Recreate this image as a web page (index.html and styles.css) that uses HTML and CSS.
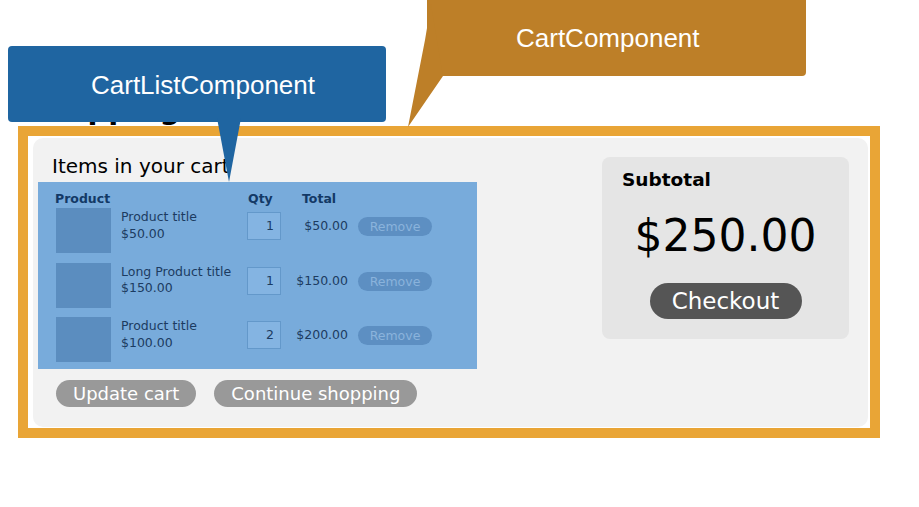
FILE: index.html
```html
<!DOCTYPE html>
<html lang="en">
<head>
<meta charset="utf-8">
<title>Cart</title>
<link rel="stylesheet" href="styles.css">
</head>
<body>
<div class="page">
  <h1 class="page-title">Shopping cart</h1>
  <div class="cart-frame">
    <div class="cart-panel">
      <div class="cart-main">
        <h2 class="items-heading">Items in your cart</h2>
        <div class="cart-list">
          <div class="list-head">
            <span class="h-product">Product</span>
            <span class="h-qty">Qty</span>
            <span class="h-total">Total</span>
          </div>
          <div class="list-row">
            <div class="thumb"></div>
            <div class="info"><div>Product title</div><div>$50.00</div></div>
            <div class="qty">1</div>
            <div class="line-total">$50.00</div>
            <div class="remove">Remove</div>
          </div>
          <div class="list-row">
            <div class="thumb"></div>
            <div class="info"><div>Long Product title</div><div>$150.00</div></div>
            <div class="qty">1</div>
            <div class="line-total">$150.00</div>
            <div class="remove">Remove</div>
          </div>
          <div class="list-row">
            <div class="thumb"></div>
            <div class="info"><div>Product title</div><div>$100.00</div></div>
            <div class="qty">2</div>
            <div class="line-total">$200.00</div>
            <div class="remove">Remove</div>
          </div>
        </div>
        <div class="cart-actions">
          <span class="pill">Update cart</span>
          <span class="pill">Continue shopping</span>
        </div>
      </div>
      <aside class="summary">
        <div class="summary-label">Subtotal</div>
        <div class="summary-amount">$250.00</div>
        <div class="summary-action"><span class="checkout">Checkout</span></div>
      </aside>
    </div>
  </div>

  <div class="callout callout-list">CartListComponent<svg class="tail" width="378" height="140" viewBox="0 0 378 140"><path d="M209 72 L233 72 L221 136 Z" fill="#1f65a1"/></svg></div>
  <div class="callout callout-cart">CartComponent<svg class="tail" width="379" height="140" viewBox="0 0 379 140"><path d="M4 10 L-2 46 L-19 133 L16 82 Z" fill="#bd7f28"/></svg></div>
</div>
</body>
</html>
```

FILE: styles.css
```css
* { box-sizing: border-box; }

html, body {
  margin: 0;
  padding: 0;
  background: #ffffff;
}

body {
  font-family: "DejaVu Sans", Verdana, sans-serif;
  color: #000;
  width: 919px;
  height: 507px;
  overflow: hidden;
}

.page {
  position: relative;
  padding-top: 92px;
}

.page-title {
  margin: 0 0 0 26px;
  font-size: 29px;
  line-height: 34px;
  font-weight: bold;
}

.cart-frame {
  margin-left: 18px;
  width: 862px;
  height: 312px;
  border: 10px solid #e9a536;
  padding: 2px 2px 1px 5px;
}

.cart-panel {
  height: 289px;
  background: #f2f2f2;
  border-radius: 10px;
  display: flex;
  justify-content: space-between;
  align-items: flex-start;
}

.cart-main {
  padding: 17px 0 0 5px;
}

.items-heading {
  margin: 0 0 4px 14px;
  font-size: 20px;
  line-height: 23px;
  font-weight: normal;
}

.cart-list {
  width: 439px;
  background: #78abdb;
  padding: 9px 0 7px 18px;
  color: #1c3b61;
  font-size: 12.5px;
}

.list-head,
.list-row {
  display: grid;
  grid-template-columns: 65px 126px 34px 77px 74px;
}

.list-head {
  font-weight: bold;
  line-height: 15px;
  margin-bottom: 2px;
  color: #133966;
}

.h-product { grid-column: 1 / 3; margin-left: -1px; }
.h-qty { grid-column: 3; margin-left: 1px; }
.h-total { grid-column: 4; padding-left: 21px; }

.list-row {
  height: 45px;
  align-items: start;
}

.list-row + .list-row { margin-top: 9.5px; }

.thumb {
  width: 55px;
  height: 45px;
  background: #5b8dbf;
}

.info {
  margin-top: 1px;
  line-height: 16.5px;
  white-space: nowrap;
}

.qty {
  margin-top: 4px;
  height: 28px;
  line-height: 26px;
  border: 1px solid #6398ca;
  background: #84b4e2;
  text-align: right;
  padding-right: 6px;
}

.line-total {
  margin-top: 4px;
  height: 28px;
  line-height: 28px;
  text-align: right;
  padding-right: 10px;
  white-space: nowrap;
}

.remove {
  margin-top: 9px;
  height: 19px;
  line-height: 19px;
  border-radius: 10px;
  background: #5d8fc2;
  color: #8ab3dc;
  text-align: center;
}

.cart-actions {
  margin: 11px 0 0 18px;
  display: flex;
  gap: 18px;
}

.pill {
  height: 27px;
  line-height: 27px;
  padding: 0 17px;
  border-radius: 14px;
  background: #999999;
  color: #ffffff;
  font-size: 18px;
  white-space: nowrap;
}

.summary {
  margin: 19px 19px 0 0;
  width: 247px;
  height: 182px;
  background: #e5e5e5;
  border-radius: 8px;
  padding: 12px 0 0 20px;
}

.summary-label {
  font-weight: bold;
  font-size: 18.5px;
  line-height: 22px;
}

.summary-amount {
  margin: 19px 0 0 -20px;
  font-size: 44px;
  line-height: 52px;
  text-align: center;
}

.summary-action {
  margin: 21px 0 0 -20px;
  display: flex;
  justify-content: center;
}

.checkout {
  display: block;
  width: 152px;
  height: 36px;
  line-height: 36px;
  border-radius: 18px;
  background: #555555;
  color: #ffffff;
  font-size: 23px;
  text-align: center;
}

.callout {
  position: absolute;
  font-family: "Liberation Sans", Arial, Helvetica, sans-serif;
  font-size: 26px;
  line-height: 30px;
  color: #ffffff;
  border-radius: 4px;
  white-space: nowrap;
}

.callout .tail {
  position: absolute;
  left: 0;
  top: 0;
  overflow: visible;
}

.callout-list {
  left: 8px;
  top: 46px;
  width: 378px;
  height: 76px;
  background: #1f65a1;
  padding: 24px 0 0 83px;
}

.callout-cart {
  left: 427px;
  top: -6px;
  width: 379px;
  height: 82px;
  background: #bd7f28;
  padding: 29px 0 0 89px;
}
```
